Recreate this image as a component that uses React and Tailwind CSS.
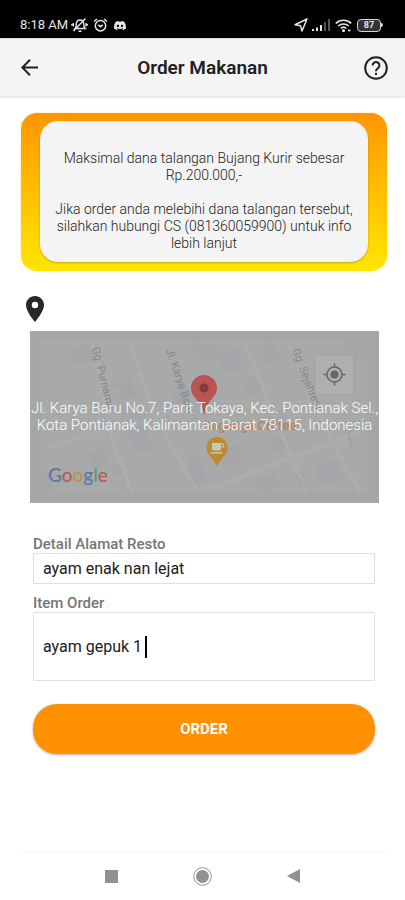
import { useState } from "react";

function StatusBar() {
  return (
    <div className="flex h-[38px] items-center justify-between bg-black pt-3 pr-[22px] pl-5 text-[#e6e6e6]">
      <div className="flex items-center">
        <span className="text-[13px] leading-4">8:18 AM</span>
        <svg className="ml-[3px] h-4 w-[17px]" viewBox="0 0 17 16" fill="none" stroke="currentColor" strokeWidth="1.4">
          <path d="M4 11.5c1-1 1.2-2.500 1.300-4.500C5.500 4.500 7 3 9 3s3.700 1.500 3.700 4c0 2 .4 3.500 1.500 4.500zM7.500 14.300h3M2.500 14 14.500 1.500M2.300 6v3.500M.8 7v1.500M15 6v3.500M16.300 7v1.500" />
        </svg>
        <svg className="ml-[5px] h-4 w-[15px]" viewBox="0 0 15 16" fill="none" stroke="currentColor" strokeWidth="1.5">
          <circle cx="7.500" cy="8.700" r="5.200" />
          <path d="M1 4.500 4 2M14 4.500 11 2M5.200 7.800l2.300 1.900 2.300-1.900" />
        </svg>
        <svg className="ml-[6px] h-[9px] w-3" viewBox="0 0 24 18" fill="currentColor">
          <path d="M20.300 1.500A20 20 0 0 0 15.400 0l-.7 1.300a18 18 0 0 0-5.500 0L8.600 0a20 20 0 0 0-4.900 1.500C.5 6-.3 10.500.1 15a20 20 0 0 0 6 3l1.300-2-2-1 .5-.4c4 1.800 8.200 1.800 12.100 0l.5.400-2 1 1.300 2a20 20 0 0 0 6-3c.5-5.200-.8-9.700-3.500-13.500zM8 12.300c-1.200 0-2.200-1.100-2.200-2.400s1-2.400 2.200-2.400 2.200 1.100 2.200 2.400-1 2.400-2.200 2.400zm8 0c-1.200 0-2.200-1.100-2.200-2.400s1-2.400 2.200-2.400 2.200 1.100 2.200 2.400-1 2.400-2.200 2.400z" />
        </svg>
      </div>
      <div className="flex items-center">
        <svg className="h-[14px] w-[14px]" viewBox="0 0 14 14" fill="none" stroke="currentColor" strokeWidth="1.500" strokeLinejoin="round">
          <path d="M13 1 1 6.700l5.500 1L8 13z" />
        </svg>
        <svg className="ml-1 h-3 w-[18px]" viewBox="0 0 18 12" fill="currentColor">
          <path d="M0 10h2v2H0zM4 8.500h2V12H4zM8 6h2v6H8z" />
          <path fill="#555" d="M12 3h2v9h-2zM16 0h2v12h-2z" />
        </svg>
        <svg className="ml-[5px] h-[13px] w-[17px]" viewBox="0 0 17 13" fill="none" stroke="currentColor" strokeWidth="1.600">
          <path d="M.8 4.300c4.400-4 11-4 15.400 0M3.200 7c3-2.700 7.600-2.700 10.600 0M5.700 9.500c1.600-1.500 4-1.500 5.600 0" />
          <circle cx="8.500" cy="11.600" r=".7" fill="currentColor" />
          <path d="M13 11.500h2.500" />
        </svg>
        <div className="ml-[5px] flex h-[13px] w-6 items-center justify-center rounded-[4px] border border-[#d6d6d6] bg-[#333]">
          <span className="text-[9px] leading-[9px] font-bold">87</span>
        </div>
        <span className="h-1 w-[2px] rounded-r bg-[#d6d6d6]" />
      </div>
    </div>
  );
}

function Header() {
  return (
    <header className="flex h-[58px] items-center justify-between border-t border-[#dcdcdc] bg-[#f4f4f4] px-[17px] text-[#202020] shadow-[0_1px_3px_rgba(0,0,0,0.15)]">
      <button type="button" aria-label="Kembali" className="flex w-6 justify-center">
        <svg className="h-[17px] w-[17px]" viewBox="0 0 17 17" fill="none" stroke="currentColor" strokeWidth="2">
          <path d="M17 8.500H1.500M9 .8 1.300 8.500 9 16.200" />
        </svg>
      </button>
      <h1 className="text-[19px] leading-6 font-semibold">Order Makanan</h1>
      <button type="button" aria-label="Bantuan" className="flex w-6 justify-center">
        <svg className="h-6 w-6 shrink-0" viewBox="0 0 24 24" fill="none" stroke="currentColor" strokeWidth="2">
          <circle cx="12" cy="12" r="10.800" />
          <path d="M8.600 9.400a3.400 3.400 0 1 1 5.800 2.400c-1.200 1.100-2.400 1.800-2.400 3.500" />
          <path d="M12 16.700v2.200" />
        </svg>
      </button>
    </header>
  );
}

function Notice() {
  return (
    <section className="mt-[17px] mr-[18px] ml-[21px] rounded-2xl bg-linear-to-b from-[#ff9500] to-[#ffe600] px-[19px] pt-2 pb-[9px] shadow-[0_0_2px_rgba(255,190,0,0.6)]">
      <div className="rounded-[18px] bg-[#f4f4f4] px-2 pt-[29px] pb-[10px] text-center text-sm leading-[17px] font-light text-[#222] shadow-[0_1px_2px_rgba(0,0,0,0.25)]">
        <p>
          Maksimal dana talangan Bujang Kurir sebesar
          <br />
          Rp.200.000,-
        </p>
        <p className="mt-[17px]">
          Jika order anda melebihi dana talangan tersebut,
          <br />
          silahkan hubungi CS (081360059900) untuk info
          <br />
          lebih lanjut
        </p>
      </div>
    </section>
  );
}

function MapDrawing() {
  return (
    <svg className="block h-[172px] w-full" viewBox="0 0 349 172" preserveAspectRatio="xMidYMid slice">
      <rect width="349" height="172" fill="#a5a6a6" />
      <rect x="11" y="10" width="326" height="152" fill="#a8aaaa" />
      <g fill="#a4a6a9">
        <path d="M39 18l22-5 5 15-22 7zM87 56l16-5 4 14-16 5zM90 76l18-4 4 17-18 5zM98 98l18-5 7 25-18 5zM140 56l14-4 6 18-15 4zM162 12l24 2 4 16-22-4zM186 22l21-5 6 22-20 4zM210 48l18-4 5 17-18 4zM58 122l15-4 5 16-15 4zM80 134l12-3 3 11-12 3zM88 148l12-3 3 12-12 3zM158 128l12-4 8 28-14 4zM234 82l20-4 5 20-20 4zM240 108l18-5 5 15-18 5zM190 118l18-4 6 16-18 4zM312 92l14-5 10 16-16 6zM284 134l24-6 8 22-26 4zM226 148l18-6 6 14-18 6zM12 138l10 2 2 20h-12zM232 12l14 1 3 16-14 3zM314 12h22v18h-20z" />
      </g>
      <g stroke="#acadad" fill="none">
        <path strokeWidth="4" d="M62 10 82 108l20 54M100 10l24 75 45 77M214 10l62 152M258 10l40 92 32 60" />
        <path strokeWidth="5" d="M180 158 337 98" />
        <path strokeWidth="2" d="M12 118 78 99l80-21M238 81l70-22" />
      </g>
      <g stroke="#989a9b" fill="none">
        <path stroke="#9fa0a1" d="M82 54h18V38h10" />
        <path d="M265 142l8 14M318 101l4 18" />
      </g>
      <g fill="#85888a" fontFamily="Roboto, sans-serif" fontSize="11">
        <text transform="translate(62 17) rotate(76)">Gg. Purnama</text>
        <text transform="translate(136 19) rotate(71)">Jl. Karya Baru</text>
        <text transform="translate(262 19) rotate(69)">Gg. Sejahtera</text>
      </g>
      <text x="173" y="99" fill="#b38361" fontFamily="Roboto, sans-serif" fontSize="13" fontWeight="500">
        Sagatiga Coffee
      </text>
      <path fill="#b95552" d="M174 44c-7.200 0-13 5.700-13 12.800 0 8.500 7.500 12 11.500 20.200l1.500 8 1.500-8c4-8.200 11.500-11.700 11.500-20.200C187 49.700 181.200 44 174 44z" />
      <circle cx="174" cy="57" r="4.500" fill="#813b39" />
      <path fill="#bd8a30" d="M187 106c-6 0-10.500 4.600-10.500 10.500 0 7.500 7 10 10.500 19.500 3.500-9.500 10.500-12 10.500-19.500 0-5.900-4.500-10.500-10.500-10.500z" />
      <path fill="#c9c6be" d="M182 112h9v5.500a2 2 0 0 1-2 2h-5a2 2 0 0 1-2-2zM181 121h11v1.500h-11z" />
      <path fill="none" stroke="#c9c6be" strokeWidth="1.200" d="M191 113h2.500v3H191" />
      <rect x="285" y="24" width="39" height="40" rx="1" fill="#afafaf" stroke="#a0a1a1" />
      <g transform="translate(304.500 43.500)" stroke="#666" fill="none" strokeWidth="1.500">
        <circle r="7.500" />
        <circle r="4" fill="#666" stroke="none" />
        <path d="M0-11v3.500M0 11V7.500M-11 0h3.500M11 0H7.500" />
      </g>
      <text x="18" y="151" fontFamily="Lato, sans-serif" fontSize="19" fontWeight="500">
        <tspan fill="#5877ad">G</tspan>
        <tspan fill="#b45c57">o</tspan>
        <tspan fill="#bd9541">o</tspan>
        <tspan fill="#5877ad">g</tspan>
        <tspan fill="#5d9b6d">l</tspan>
        <tspan fill="#b45c57">e</tspan>
      </text>
    </svg>
  );
}

function LocationPicker() {
  return (
    <section className="mx-[26px] mt-[25px]">
      <svg className="h-[26px] w-[18px]" viewBox="5 2 14 20" preserveAspectRatio="none" fill="#282828">
        <path d="M12 2C8.130 2 5 5.130 5 9c0 5.250 7 13 7 13s7-7.750 7-13c0-3.870-3.130-7-7-7zm0 9.500a2.500 2.500 0 0 1 0-5 2.500 2.500 0 0 1 0 5z" />
      </svg>
      <div className="relative mt-[9px] ml-1">
        <MapDrawing />
        <p className="absolute inset-0 flex items-center justify-center text-center text-[15px] leading-[17px] font-[350] whitespace-nowrap text-white">
          Jl. Karya Baru No.7, Parit Tokaya, Kec. Pontianak Sel.,
          <br />
          Kota Pontianak, Kalimantan Barat 78115, Indonesia
        </p>
      </div>
    </section>
  );
}

function OrderForm() {
  const [address, setAddress] = useState("ayam enak nan lejat");
  const [items, setItems] = useState("ayam gepuk 1");
  return (
    <form className="mt-8 mr-[30px] ml-[33px] flex flex-col" onSubmit={(e) => e.preventDefault()}>
      <label htmlFor="address" className="text-[15px] leading-[18px] font-medium text-[#757575]">
        Detail Alamat Resto
      </label>
      <input
        id="address"
        value={address}
        onChange={(e) => setAddress(e.target.value)}
        className="h-[31px] rounded-[1px] border border-[#e0e0e0] px-[9px] text-base text-[#202020] outline-none"
      />
      <label htmlFor="items" className="mt-[10px] text-[15px] leading-[18px] font-medium text-[#757575]">
        Item Order
      </label>
      <div className="relative">
        <textarea
          id="items"
          value={items}
          onChange={(e) => setItems(e.target.value)}
          className="block h-[69px] w-full resize-none rounded-[1px] border border-[#e0e0e0] px-[9px] py-6 text-base leading-5 text-[#202020] outline-none"
        />
        <span className="absolute top-6 left-28 h-[22px] w-[2px] bg-black" />
      </div>
      <button
        type="submit"
        className="mt-[23px] h-[50px] rounded-3xl bg-[#ff9000] text-[15px] font-bold text-white shadow-[0_1px_3px_rgba(0,0,0,0.3)]"
      >
        ORDER
      </button>
    </form>
  );
}

function NavigationBar() {
  return (
    <nav className="mx-5 mt-auto flex h-[49px] items-center justify-center gap-[75px] border-t border-[#f4f4f4] text-[#919191]">
      <button type="button" aria-label="Aplikasi terkini" className="h-[13px] w-[13px] bg-[#919191]" />
      <button type="button" aria-label="Beranda" className="h-[19px] w-[19px]">
        <svg className="h-full w-full" viewBox="0 0 19 19" fill="currentColor">
          <circle cx="9.500" cy="9.500" r="8.800" fill="none" stroke="currentColor" />
          <circle cx="9.500" cy="9.500" r="6.500" />
        </svg>
      </button>
      <button type="button" aria-label="Kembali ke layar sebelumnya" className="h-[14px] w-[13px]">
        <svg className="h-full w-full" viewBox="0 0 13 14" fill="currentColor">
          <path d="M13 0v14L0 7z" />
        </svg>
      </button>
    </nav>
  );
}

export default function App() {
  return (
    <div className="flex min-h-screen flex-col bg-white font-['Roboto',sans-serif]">
      <StatusBar />
      <Header />
      <main>
        <Notice />
        <LocationPicker />
        <OrderForm />
      </main>
      <NavigationBar />
    </div>
  );
}
